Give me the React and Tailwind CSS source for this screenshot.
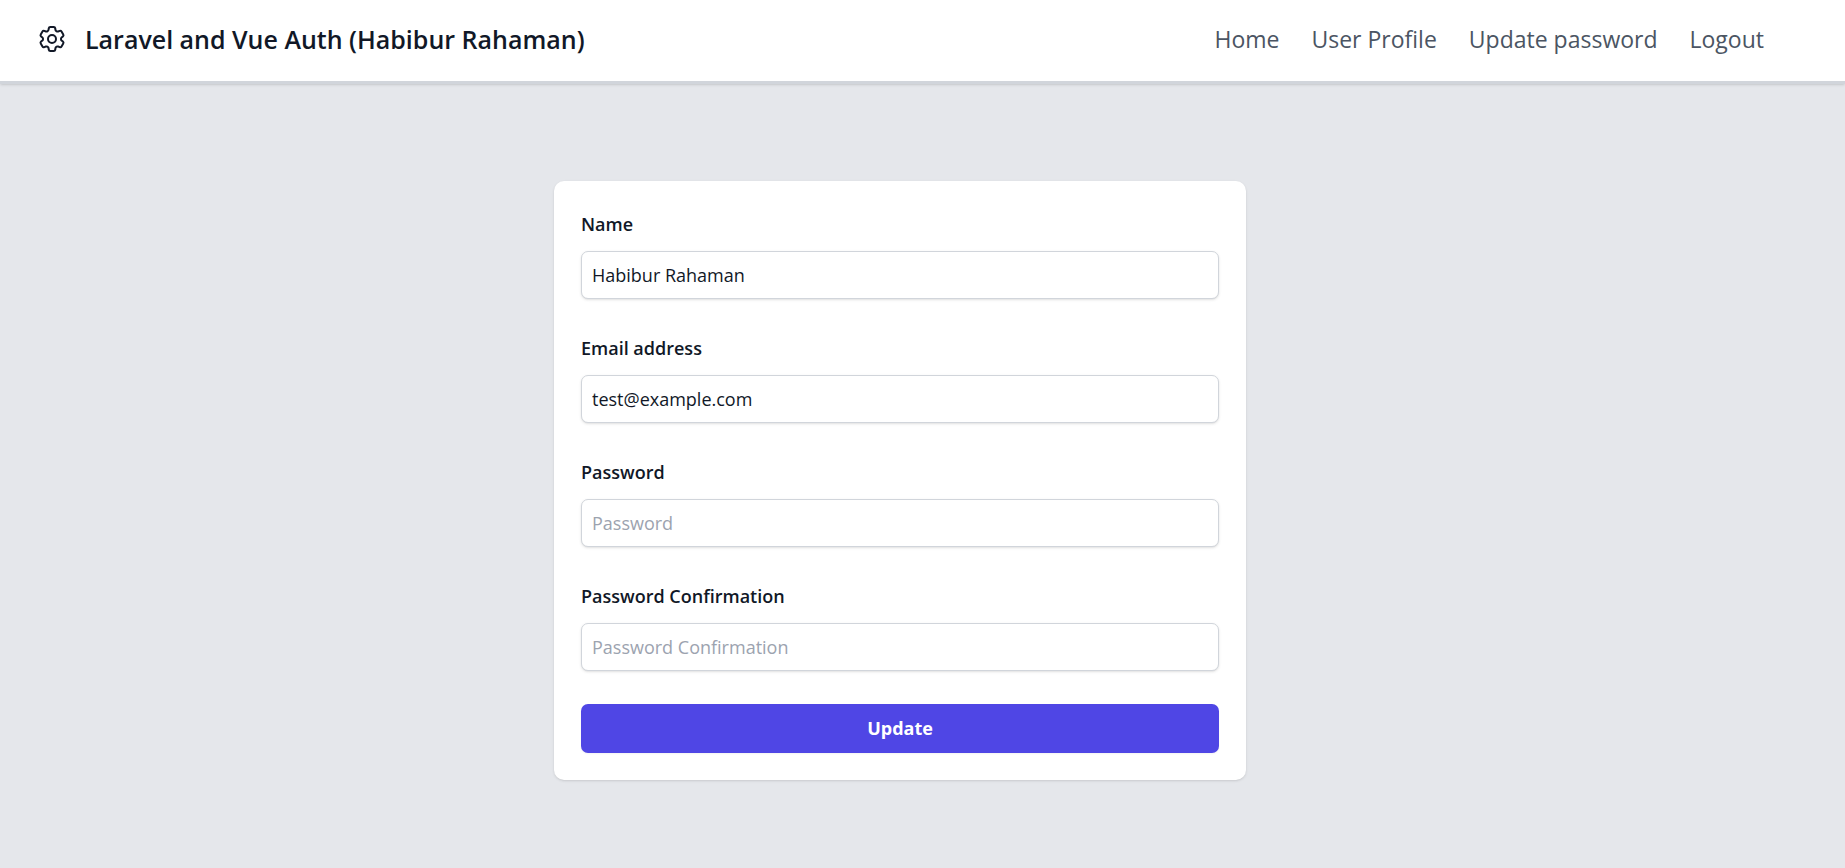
const fields = [
  { id: "name", label: "Name", type: "text", value: "Habibur Rahaman", placeholder: "Name" },
  { id: "email", label: "Email address", type: "email", value: "test@example.com", placeholder: "Email address" },
  { id: "password", label: "Password", type: "password", value: "", placeholder: "Password" },
  { id: "password-confirmation", label: "Password Confirmation", type: "password", value: "", placeholder: "Password Confirmation" },
];

const links = ["Home", "User Profile", "Update password", "Logout"];

function Gear() {
  return (
    <svg className="size-8" viewBox="0 0 24 24" fill="none" stroke="currentColor" strokeWidth="1.5" strokeLinecap="round" strokeLinejoin="round" aria-hidden="true">
      <path d="M9.594 3.94c.09-.542.56-.94 1.11-.94h2.593c.55 0 1.02.398 1.11.94l.213 1.281c.063.374.313.686.645.87.074.04.147.083.22.127.325.196.72.257 1.075.124l1.217-.456a1.125 1.125 0 0 1 1.37.49l1.296 2.247a1.125 1.125 0 0 1-.26 1.431l-1.003.827c-.293.241-.438.613-.43.992a7.723 7.723 0 0 1 0 .255c-.008.378.137.75.43.991l1.004.827c.424.35.534.955.26 1.43l-1.298 2.247a1.125 1.125 0 0 1-1.369.491l-1.217-.456c-.355-.133-.75-.072-1.076.124a6.47 6.47 0 0 1-.22.128c-.331.183-.581.495-.644.869l-.213 1.281c-.09.543-.56.94-1.11.94h-2.594c-.55 0-1.019-.398-1.11-.94l-.213-1.281c-.062-.374-.312-.686-.644-.87a6.52 6.52 0 0 1-.22-.127c-.325-.196-.72-.257-1.076-.124l-1.217.456a1.125 1.125 0 0 1-1.369-.49l-1.297-2.247a1.125 1.125 0 0 1 .26-1.431l1.004-.827c.292-.24.437-.613.43-.991a6.932 6.932 0 0 1 0-.255c.007-.38-.138-.751-.43-.992l-1.004-.827a1.125 1.125 0 0 1-.26-1.43l1.297-2.247a1.125 1.125 0 0 1 1.37-.491l1.216.456c.356.133.751.072 1.076-.124.072-.044.146-.086.22-.128.332-.183.582-.495.644-.869l.214-1.28Z" />
      <path d="M15 12a3 3 0 1 1-6 0 3 3 0 0 1 6 0Z" />
    </svg>
  );
}

export default function App() {
  return (
    <div className="min-h-screen bg-[#e5e7eb] font-['Open_Sans','Noto_Sans',sans-serif] text-[#111827]">
      <header className="flex items-center justify-between border-b-[3px] border-[#d1d5db] bg-white pt-[23px] pr-[81px] pb-[26px] pl-9 shadow-sm">
        <a href="#" className="flex items-center gap-[17px]">
          <Gear />
          <span className="text-[25px] leading-8 font-semibold">Laravel and Vue Auth (Habibur Rahaman)</span>
        </a>
        <nav className="flex gap-8">
          {links.map((link) => (
            <a key={link} href="#" className="text-[23px] leading-8 text-[#4b5563]">{link}</a>
          ))}
        </nav>
      </header>
      <main className="flex justify-center pt-[97px] pr-[45px] pb-20">
        <form className="flex w-full max-w-[692px] flex-col rounded-[10px] bg-white p-[27px] shadow-sm">
          {fields.map((f) => (
            <div key={f.id} className="mb-[33px]">
              <label htmlFor={f.id} className="mb-[11px] block text-[18px] leading-8 font-semibold">{f.label}</label>
              <input
                id={f.id}
                type={f.type}
                defaultValue={f.value}
                placeholder={f.placeholder}
                className="block h-12 w-full rounded-[7px] border border-[#d1d5db] bg-white px-[10px] text-[18px] shadow-sm placeholder:text-[#9ca3af]"
              />
            </div>
          ))}
          <button type="submit" className="h-[49px] rounded-[7px] bg-[#4f46e5] text-[18px] font-bold text-white shadow-xs">Update</button>
        </form>
      </main>
    </div>
  );
}
